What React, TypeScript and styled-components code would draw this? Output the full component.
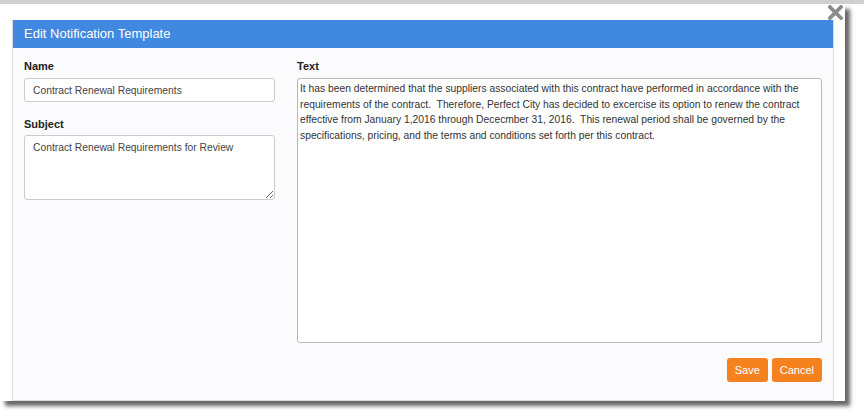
import React, {FC} from 'react';
import styled, {createGlobalStyle} from 'styled-components';

const GlobalStyle = createGlobalStyle`
  html, body {
    margin: 0;
    padding: 0;
    background: #FFFFFF;
  }

  body {
    font-family: "Liberation Sans", Arial, sans-serif;
    color: #333333;
  }
`;

const bodyText = 'It has been determined that the suppliers associated with this contract have performed in accordance with the requirements of the contract.  Therefore, Perfect City has decided to excercise its option to renew the contract effective from January 1,2016 through Dececmber 31, 2016.  This renewal period shall be governed by the specifications, pricing, and the terms and conditions set forth per this contract.';

const CloseIcon: FC = (): JSX.Element => (
    <svg width="15" height="15" viewBox="0 0 15 15">
        <path d="M2 2 L13 13 M13 2 L2 13" stroke="#8b8b8b" strokeWidth="3.8" strokeLinecap="square"/>
    </svg>
);

export default function App(): JSX.Element {
    return (
        <>
            <GlobalStyle/>
            <Page>
                <TopStrip/>
                <Frame>
                    <CloseButton aria-label="Close">
                        <CloseIcon/>
                    </CloseButton>
                    <Modal>
                        <Header>Edit Notification Template</Header>
                        <Body>
                            <Columns>
                                <LeftColumn>
                                    <Field>
                                        <Label htmlFor="name">Name</Label>
                                        <Input id="name" type="text" defaultValue="Contract Renewal Requirements"/>
                                    </Field>
                                    <Field>
                                        <Label htmlFor="subject">Subject</Label>
                                        <SubjectArea id="subject" defaultValue="Contract Renewal Requirements for Review"/>
                                    </Field>
                                </LeftColumn>
                                <RightColumn>
                                    <Label htmlFor="text">Text</Label>
                                    <TextArea id="text" defaultValue={bodyText}/>
                                    <Actions>
                                        <Button>Save</Button>
                                        <Button>Cancel</Button>
                                    </Actions>
                                </RightColumn>
                            </Columns>
                        </Body>
                    </Modal>
                </Frame>
            </Page>
        </>
    );
}

const Page = styled.div`
  width: 864px;
  height: 416px;
  overflow: hidden;
`;

const TopStrip = styled.div`
  height: 4px;
  background: #d0d0d0;
`;

const Frame = styled.div`
  position: relative;
  width: 845px;
  height: 397px;
  box-sizing: border-box;
  padding: 16px 11px 0 12px;
  background: #FFFFFF;
  display: flex;
  flex-direction: column;
  overflow: hidden;
  box-shadow: 5px 5px 4px rgba(0, 0, 0, 0.6);
`;

const CloseButton = styled.div`
  position: absolute;
  top: 1px;
  right: 2px;
  width: 15px;
  height: 15px;
  display: flex;
  z-index: 2;
`;

const Modal = styled.div`
  flex: 1;
  display: flex;
  flex-direction: column;
  border: 1px solid #dcdcdc;
  border-top: none;
  background: #fbfafd;
`;

const Header = styled.div`
  height: 28px;
  padding-left: 11px;
  background: #4188e0;
  color: #FFFFFF;
  font-size: 13px;
  line-height: 28px;
`;

const Body = styled.div`
  padding: 11px 11px 0 11px;
`;

const Columns = styled.div`
  display: flex;
  flex-direction: row;
  gap: 22px;
`;

const LeftColumn = styled.div`
  width: 251px;
  display: flex;
  flex-direction: column;
  gap: 15px;
`;

const RightColumn = styled.div`
  flex: 1;
  display: flex;
  flex-direction: column;
`;

const Field = styled.div`
  display: flex;
  flex-direction: column;
`;

const Label = styled.label`
  font-size: 11px;
  font-weight: 700;
  line-height: 15px;
  color: #222222;
  margin-bottom: 4px;
`;

const Input = styled.input`
  box-sizing: border-box;
  width: 100%;
  height: 24px;
  padding: 0 8px;
  border: 1px solid #cccccc;
  border-radius: 3px;
  background: #FFFFFF;
  font-family: "Liberation Sans", Arial, sans-serif;
  font-size: 10.3px;
  color: #444444;
  outline: 0;
`;

const SubjectArea = styled.textarea`
  box-sizing: border-box;
  width: 100%;
  height: 65px;
  margin: -1px 0 0;
  padding: 4px 8px;
  border: 1px solid #cccccc;
  border-radius: 3px;
  background: #FFFFFF;
  font-family: "Liberation Sans", Arial, sans-serif;
  font-size: 10.3px;
  line-height: 15.7px;
  color: #444444;
  resize: vertical;
  outline: 0;
`;

const TextArea = styled.textarea`
  box-sizing: border-box;
  width: 100%;
  height: 265px;
  margin: 0;
  padding: 2px 2px;
  border: 1px solid #b8b8b8;
  border-radius: 3px;
  background: #FFFFFF;
  font-family: "Liberation Sans", Arial, sans-serif;
  font-size: 10.3px;
  line-height: 15.7px;
  color: #333333;
  resize: none;
  outline: 0;
`;

const Actions = styled.div`
  display: flex;
  justify-content: flex-end;
  gap: 4px;
  margin-top: 15px;
`;

const Button = styled.button`
  height: 24px;
  padding: 0 8px;
  border: none;
  border-radius: 3px;
  background: #f5821f;
  color: #FFFFFF;
  font-family: "Liberation Sans", Arial, sans-serif;
  font-size: 11px;
  cursor: pointer;
`;
